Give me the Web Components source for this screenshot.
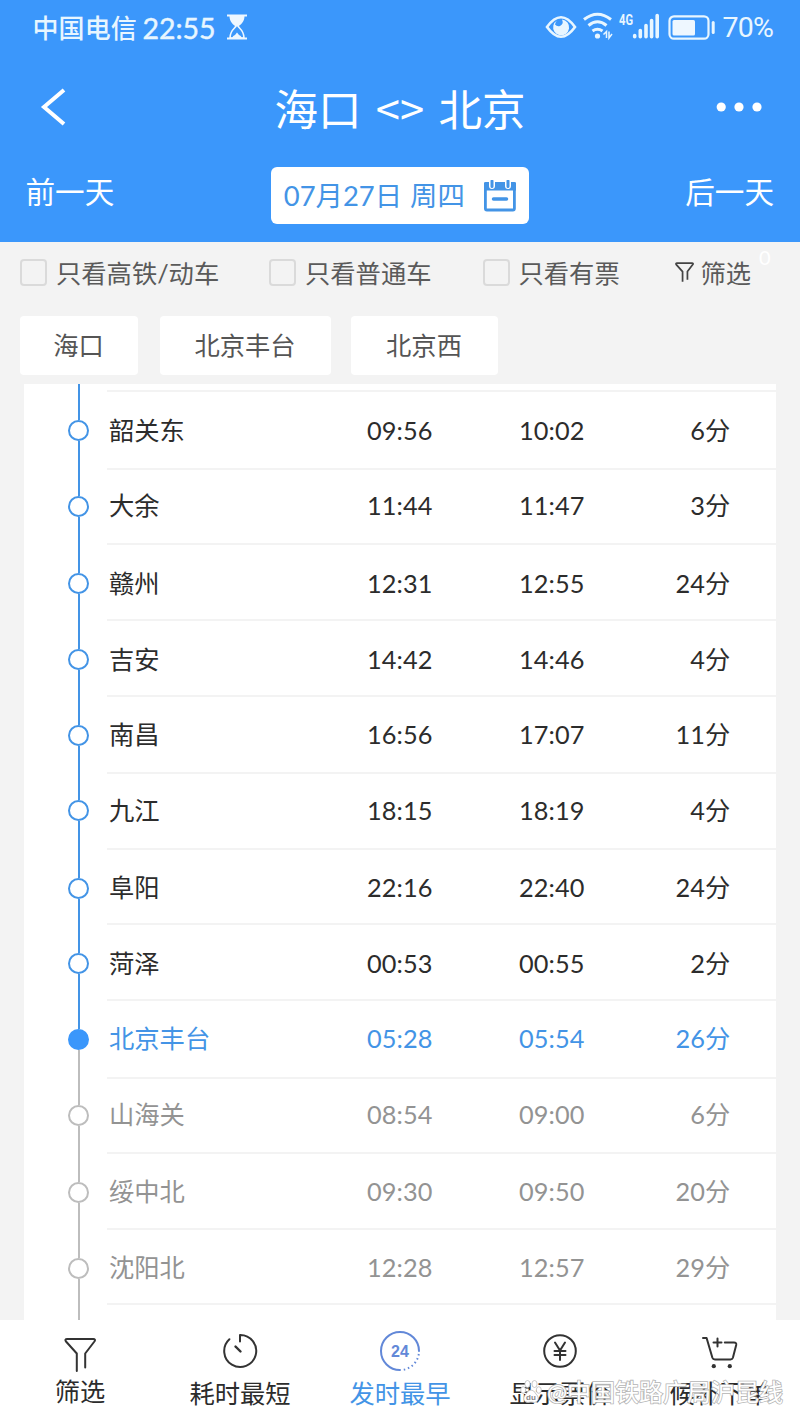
<!DOCTYPE html>
<html lang="zh-CN">
<head>
<meta charset="utf-8">
<meta name="viewport" content="width=device-width">
<title>海口 - 北京</title>
<style>
body{
    margin: 0;
    width: 800px;
    height: 1422px;
    overflow: hidden;
    display: flex;
    flex-direction: column;
    background: #f3f3f3;
    font-family: Lato, "Noto Sans CJK SC", sans-serif;
    font-size: 25.3px;
    line-height: 1;
    white-space: nowrap;
    --blue: #3b97fb;
    --link: #4394e6;
}
</style>
</head>
<body>
<app-header>
    <status-bar></status-bar>
    <title-bar>海口 &lt;&gt; 北京</title-bar>
    <date-bar date="07月27日 周四"></date-bar>
</app-header>

<filter-bar>
    <check-box style="width:249px">只看高铁/动车</check-box>
    <check-box style="width:213.5px">只看普通车</check-box>
    <check-box style="width:192px">只看有票</check-box>
</filter-bar>

<chip-list>
    <chip-item style="width:118px;margin-right:22px">海口</chip-item>
    <chip-item style="width:171px;margin-right:20px">北京丰台</chip-item>
    <chip-item style="width:147px">北京西</chip-item>
</chip-list>

<stop-list></stop-list>

<tab-bar>
    <tab-item icon="filter">筛选</tab-item>
    <tab-item icon="clock">耗时最短</tab-item>
    <tab-item icon="day" active>发时最早</tab-item>
    <tab-item icon="yen">显示票价</tab-item>
    <tab-item icon="cart">候补下单</tab-item>
    <water-mark slot="mark">@中国铁路广局沪昆线</water-mark>
</tab-bar>

<script>
const FUNNEL = `<path d="M3.2 2H29.2Q32 2 30.4 4.5L21.2 16.5V30.5M3.2 2Q.4 2 2 4.5L12.8 16.5V34"/>`

const ICONS = {
    filter: `<svg width="32" height="38" viewBox="0 0 32 38">${FUNNEL}</svg>`,
    clock: `<svg width="36" height="36" viewBox="0 0 36 36"><path d="M7.4 6.2A16 16 0 1 0 18 2V8.5"/><path d="M13.500 13.500L18.500 18.500" stroke-width="2.4"/></svg>`,
    day: `<svg width="42" height="42" viewBox="0 0 42 42" style="stroke:#6288d8"><path d="M21 40A19 19 0 1 1 40 21"/><path d="M39.800 24A19 19 0 0 1 23 40" stroke-dasharray="1.500 2.800" style="stroke-linecap:butt"/><text x="21" y="26.5" text-anchor="middle" style="font:700 16px 'Liberation Sans',sans-serif;fill:#6288d8;stroke:none">24</text></svg>`,
    yen: `<svg width="36" height="36" viewBox="0 0 36 36"><circle cx="18" cy="18" r="15.8"/><path d="M13 9.5L18 17.5L23 9.5M18 17.5V27M12.5 18H23.5M12.5 22H23.5"/></svg>`,
    cart: `<svg width="36" height="36" viewBox="0 0 36 34"><path d="M1 2H4.6L10.4 21.8Q11 23.6 13 23.6H28.5Q30.3 23.6 30.9 21.8L34.2 9Q34.7 6.5 32 6.5H22.8M11.5 6.5H19.5M15.5 2.5V10.5"/><g style="fill:#333;stroke:none"><circle cx="11.8" cy="30.2" r="2.1"/><circle cx="27.8" cy="30.2" r="2.1"/></g></svg>`,
}

const STOPS = [
    // name, arrive, depart, stay, state, row height, top padding
    ['韶关东', '09:56', '10:02', '6分', 'past', 78, 3],
    ['大余', '11:44', '11:47', '3分', 'past', 75, 1],
    ['赣州', '12:31', '12:55', '24分', 'past', 76, 5],
    ['吉安', '14:42', '14:46', '4分', 'past', 76, 5],
    ['南昌', '16:56', '17:07', '11分', 'past', 77, 3],
    ['九江', '18:15', '18:19', '4分', 'past', 76, 1],
    ['阜阳', '22:16', '22:40', '24分', 'past', 75, 5],
    ['菏泽', '00:53', '00:55', '2分', 'past', 76, 5],
    ['北京丰台', '05:28', '05:54', '26分', 'here', 78, 2],
    ['山海关', '08:54', '09:00', '6分', 'next', 75, 1],
    ['绥中北', '09:30', '09:50', '20分', 'next', 76, 4],
    ['沈阳北', '12:28', '12:57', '29分', 'next', 75, 5],
]


class Base extends HTMLElement{
    connectedCallback(){
        this.attachShadow({mode:'open'}).innerHTML = this.html
    }
}


class AppHeader extends Base{
    get html(){
        return `
        <slot></slot>
        <style>
        :host{
            display: grid;
            grid-template-rows: 56px 104px 82px;
            flex: none;
            background: var(--blue);
            color: #fff;
        }
        </style>
        `
    }
}


class StatusBar extends Base{
    get html(){
        return `
        <span class="carrier">中国电信</span>
        <span class="time">22:55</span>
        <svg class="glass" width="20" height="26" viewBox="0 0 20 26" fill="#eef7ff">
            <path d="M0 .5H20V2.500H0ZM0 23.500H20V25.4H0ZM2.5 2H17.5C17.5 8 14 10 11.5 12.5H8.5C6 10 2.5 8 2.5 2Z"/>
            <path d="M9 12C8.500 14 3 16 3 24H17C17 16 11.500 14 11 12" fill="none" stroke="#eef7ff" stroke-width="1.6"/>
            <path d="M5 24Q6 21.500 8 21L10 18.500L12 21Q14 21.500 15 24Z"/>
        </svg>
        <svg class="signals" width="174" height="32" viewBox="0 0 174 32" fill="none" stroke="#e8f6ff">
            <path d="M2 15Q16 -4.500 30 15Q16 34.500 2 15Z" stroke-width="2.600"/>
            <path d="M12 8.500A8 8 0 1 0 22.500 10.500A8 8 0 0 0 17 7.500Q19 12 15 14Q12 15 10 12.500Q10.500 10 12 8.500Z" fill="#e8f6ff" stroke="none"/>
            <g stroke-width="3">
                <path d="M39 7.500Q52.500 -3 66 7.500M43.500 13.500Q52.500 6 61.500 13.500M47.500 19Q52.500 15.500 57.500 19"/>
            </g>
            <circle cx="52.500" cy="24" r="2.600" fill="#e8f6ff" stroke="none"/>
            <path d="M58.500 22.500L61.500 19.500V26M64 19.500V26L67 22" stroke-width="1.500"/>
            <g stroke-width="3.600" stroke-linecap="round">
                <path d="M89.700 23.500V24.800M95.300 18.500V24.800M101 13.500V24.800M106.600 8.500V24.800M112.200 3.500V24.800"/>
            </g>
            <rect x="124.500" y="4.300" width="39" height="22.400" rx="4.500" stroke-width="2.200"/>
            <rect x="127.500" y="8" width="22.500" height="15.500" rx="1.500" fill="#eef7ff" stroke="none"/>
            <path d="M168.200 10.500V20.500" stroke-width="3" stroke-linecap="round"/>
            <text x="74" y="13" textLength="14" lengthAdjust="spacingAndGlyphs" style="font:700 14.500px Roboto,sans-serif;fill:#e8f6ff;stroke:none">4G</text>
        </svg>
        <span class="percent">70%</span>
        <style>
        :host{
            display: flex;
            align-items: center;
            padding: 0 27px 0 32.500px;
            color: #e8f6ff;
        }
        .carrier{
            font-size: 26px;
            font-weight: 500;
            letter-spacing: .1px;
        }
        .time{
            font-size: 28.5px;
            margin-left: 5.500px;
            -webkit-text-stroke: .4px;
        }
        .glass{
            margin: -2px 0 0 11.500px;
        }
        .signals{
            margin: 0 0 0 auto;
        }
        .percent{
            font: 28.500px/1 Roboto, sans-serif;
            margin: 1px 0 0 3px;
            letter-spacing: -.8px;
        }
        </style>
        `
    }
}


class TitleBar extends Base{
    get html(){
        return `
        <svg width="28" height="38" viewBox="0 0 28 38" fill="none" stroke="#fff" stroke-width="4"><path d="M25 2L5 19L25 36"/></svg>
        <span><slot></slot></span>
        <svg width="46" height="10" viewBox="0 0 46 10" fill="#fff"><circle cx="5.2" cy="5" r="4.600"/><circle cx="23" cy="5" r="4.600"/><circle cx="41" cy="5" r="4.600"/></svg>
        <style>
        :host{
            display: flex;
            align-items: center;
            justify-content: space-between;
            padding: 0 38px 2px 39px;
            font: 43.500px/1 "Noto Sans CJK SC", sans-serif;
            word-spacing: 4.500px;
        }
        span{
            margin-left: 17px;
            padding-top: 1px;
        }
        </style>
        `
    }
}


class DateBar extends Base{
    get html(){
        return `
        <span>前一天</span>
        <div>
            <b>${this.getAttribute('date')}</b>
            <svg width="32" height="32" viewBox="0 0 32 32" fill="none" stroke="#4394e6">
                <rect x="1.400" y="6" width="29" height="24" rx="1.500" stroke-width="2.800"/>
                <path d="M0 3Q0 2 1.500 2H30.500Q32 2 32 3V10.500H0Z" fill="#4394e6" stroke="none"/>
                <path d="M8 0V6M24 0V6" stroke="#fff" stroke-width="6" stroke-linecap="round"/>
                <path d="M8 1V6.500M24 1V6.500" stroke-width="3" stroke-linecap="round"/>
                <path d="M9.500 19H22.500" stroke-width="3.500" stroke-linecap="round"/>
            </svg>
        </div>
        <span>后一天</span>
        <style>
        :host{
            display: flex;
            justify-content: space-between;
            padding: 7px 26px 18px 25.500px;
        }
        span{
            font-size: 29.600px;
            line-height: 50px;
        }
        div{
            box-sizing: border-box;
            width: 258px;
            height: 57px;
            padding: 0 13px 0 13px;
            display: flex;
            align-items: center;
            justify-content: space-between;
            border-radius: 6px;
            background: #fff;
            color: var(--link);
        }
        b{
            font-size: 27.400px;
            font-weight: 400;
            word-spacing: 1px;
        }
        </style>
        `
    }
}


class FilterBar extends Base{
    get html(){
        return `
        <slot></slot>
        <div>
            <svg width="20" height="22" viewBox="0 0 34 38" fill="none" stroke="#444" stroke-width="3">${FUNNEL}</svg>
            <span>筛选</span>
            <sup>0</sup>
        </div>
        <style>
        :host{
            display: flex;
            flex: none;
            height: 62px;
            padding-left: 20px;
            align-items: center;
            color: #5a5a5a;
        }
        div{
            display: flex;
            align-items: center;
            gap: 6px;
        }
        span{
            padding-top: 2px;
        }
        sup{
            align-self: flex-start;
            margin: -12px 0 0 2px;
            font-size: 20px;
            line-height: 20px;
            color: #fff;
        }
        </style>
        `
    }
}


class CheckBox extends Base{
    get html(){
        return `
        <i></i>
        <span><slot></slot></span>
        <style>
        :host{
            display: flex;
            align-items: center;
            gap: 9px;
        }
        i{
            box-sizing: border-box;
            width: 27px;
            height: 27px;
            border: solid 2px #dadada;
            border-radius: 4px;
        }
        span{
            padding-top: 2px;
        }
        </style>
        `
    }
}


class ChipList extends Base{
    get html(){
        return `
        <slot></slot>
        <style>
        :host{
            display: flex;
            flex: none;
            padding: 12px 20px 9px;
        }
        </style>
        `
    }
}


class ChipItem extends Base{
    get html(){
        return `
        <slot></slot>
        <style>
        :host{
            display: grid;
            place-content: center;
            box-sizing: border-box;
            height: 59px;
            padding-right: 1px;
            border-radius: 4px;
            background: #fff;
            color: #555;
        }
        </style>
        `
    }
}


class StopList extends Base{
    get html(){
        return `
        <div></div>
        ${STOPS.map(([name, arrive, depart, stay, state, height, top]) => `
            <stop-row class="${state}" name="${name}" arrive="${arrive}" depart="${depart}" stay="${stay}" style="height:${height}px;--top:${top}px"></stop-row>
        `).join('')}
        <stop-row class="next" style="height:76px;--top:4px"></stop-row>
        <style>
        :host{
            display: block;
            box-sizing: border-box;
            height: 936px;
            flex: none;
            overflow: hidden;
            margin: 0 24px;
            background: #fff;
        }
        div{
            width: 2px;
            height: 6px;
            margin-left: 54px;
            background: var(--link);
        }
        </style>
        `
    }
}


class StopRow extends Base{
    get html(){
        const v = name => this.getAttribute(name) || ''
        return `
        <div id="rail"><i></i>${v('name') ? '<u></u>' : '<i></i>'}<i></i></div>
        <div id="line">
            <span>${v('name')}</span>
            <span class="time">${v('arrive')}</span>
            <span class="time">${v('depart')}</span>
            <span class="stay">${v('stay')}</span>
        </div>
        <style>
        :host{
            display: grid;
            grid-template-columns: 83px 1fr;
            color: #2c2c2c;
            --before: var(--link);
            --after: var(--link);
        }
        :host(.here){
            color: var(--link);
            --after: #bdbdbd;
        }
        :host(.next){
            color: #939393;
            --before: #bdbdbd;
            --after: #bdbdbd;
        }
        #rail{
            display: grid;
            justify-items: center;
            grid-template-rows: calc(50% + var(--top) / 2 - 10.500px) 21px 1fr;
            width: 109px;
        }
        i{
            width: 2px;
            background: var(--before);
        }
        u + i{
            background: var(--after);
        }
        u{
            box-sizing: border-box;
            width: 21px;
            border: solid 2px var(--before);
            border-radius: 50%;
        }
        :host(.here) u{
            border-color: var(--blue);
            background: var(--blue);
        }
        #line{
            display: grid;
            grid-template-columns: 258px 152px 100px 1fr;
            align-items: center;
            padding: var(--top) 45.500px 2px 2px;
            border-top: solid 2px #f3f3f3;
            box-sizing: border-box;
        }
        .time, .stay{
            letter-spacing: .1px;
        }
        .stay{
            text-align: right;
        }
        </style>
        `
    }
}


class TabBar extends Base{
    get html(){
        return `
        <slot></slot>
        <slot name="mark"></slot>
        <style>
        :host{
            display: grid;
            position: relative;
            grid-template-columns: repeat(5, 160px);
            height: 102px;
            flex: none;
            background: #fff;
        }
        </style>
        `
    }
}


class TabItem extends Base{
    get html(){
        return `
        <div>${ICONS[this.getAttribute('icon')]}</div>
        <slot></slot>
        <style>
        :host{
            display: flex;
            flex-direction: column;
            align-items: center;
            color: #2c2c2c;
        }
        :host([active]){
            color: var(--link);
        }
        :host([icon="filter"]) div{
            height: 59px;
            padding-top: 12px;
        }
        :host([icon="cart"]) div{
            padding-top: 5px;
        }
        div{
            box-sizing: border-box;
            display: grid;
            place-items: center;
            height: 61px;
        }
        svg{
            fill: none;
            stroke: #333;
            stroke-width: 2;
            stroke-linecap: round;
            stroke-linejoin: round;
        }
        </style>
        `
    }
}


// sits over the labels of the last two tabs
class WaterMark extends Base{
    get html(){
        return `
        <svg width="22" height="24" viewBox="0 0 22 24" fill="#fff" stroke="#bbb" stroke-width=".8">
            <ellipse cx="3.200" cy="10" rx="2.500" ry="3.300"/>
            <ellipse cx="7.500" cy="4" rx="2.600" ry="3.500"/>
            <ellipse cx="14.500" cy="4" rx="2.600" ry="3.500"/>
            <ellipse cx="18.800" cy="10" rx="2.500" ry="3.300"/>
            <path d="M11 10Q14 10 16 14Q20 18 17 21.500Q15 23 11 22Q7 23 5 21.500Q2 18 6 14Q8 10 11 10Z"/>
            <text x="11" y="20" text-anchor="middle" style="font:700 8px 'Liberation Sans',sans-serif;fill:#888;stroke:none">du</text>
        </svg>
        <slot></slot>
        <style>
        :host{
            position: absolute;
            left: 520px;
            top: 60px;
            display: flex;
            align-items: center;
            gap: 5px;
            font-size: 24px;
            color: #fff;
            -webkit-text-stroke: 1.600px #b4b4b4;
            paint-order: stroke fill;
        }
        svg{
            paint-order: normal;
            -webkit-text-stroke: 0;
        }
        </style>
        `
    }
}


customElements.define('app-header', AppHeader)
customElements.define('status-bar', StatusBar)
customElements.define('title-bar', TitleBar)
customElements.define('date-bar', DateBar)
customElements.define('filter-bar', FilterBar)
customElements.define('check-box', CheckBox)
customElements.define('chip-list', ChipList)
customElements.define('chip-item', ChipItem)
customElements.define('stop-row', StopRow)
customElements.define('stop-list', StopList)
customElements.define('tab-bar', TabBar)
customElements.define('tab-item', TabItem)
customElements.define('water-mark', WaterMark)
</script>
</body>
</html>
